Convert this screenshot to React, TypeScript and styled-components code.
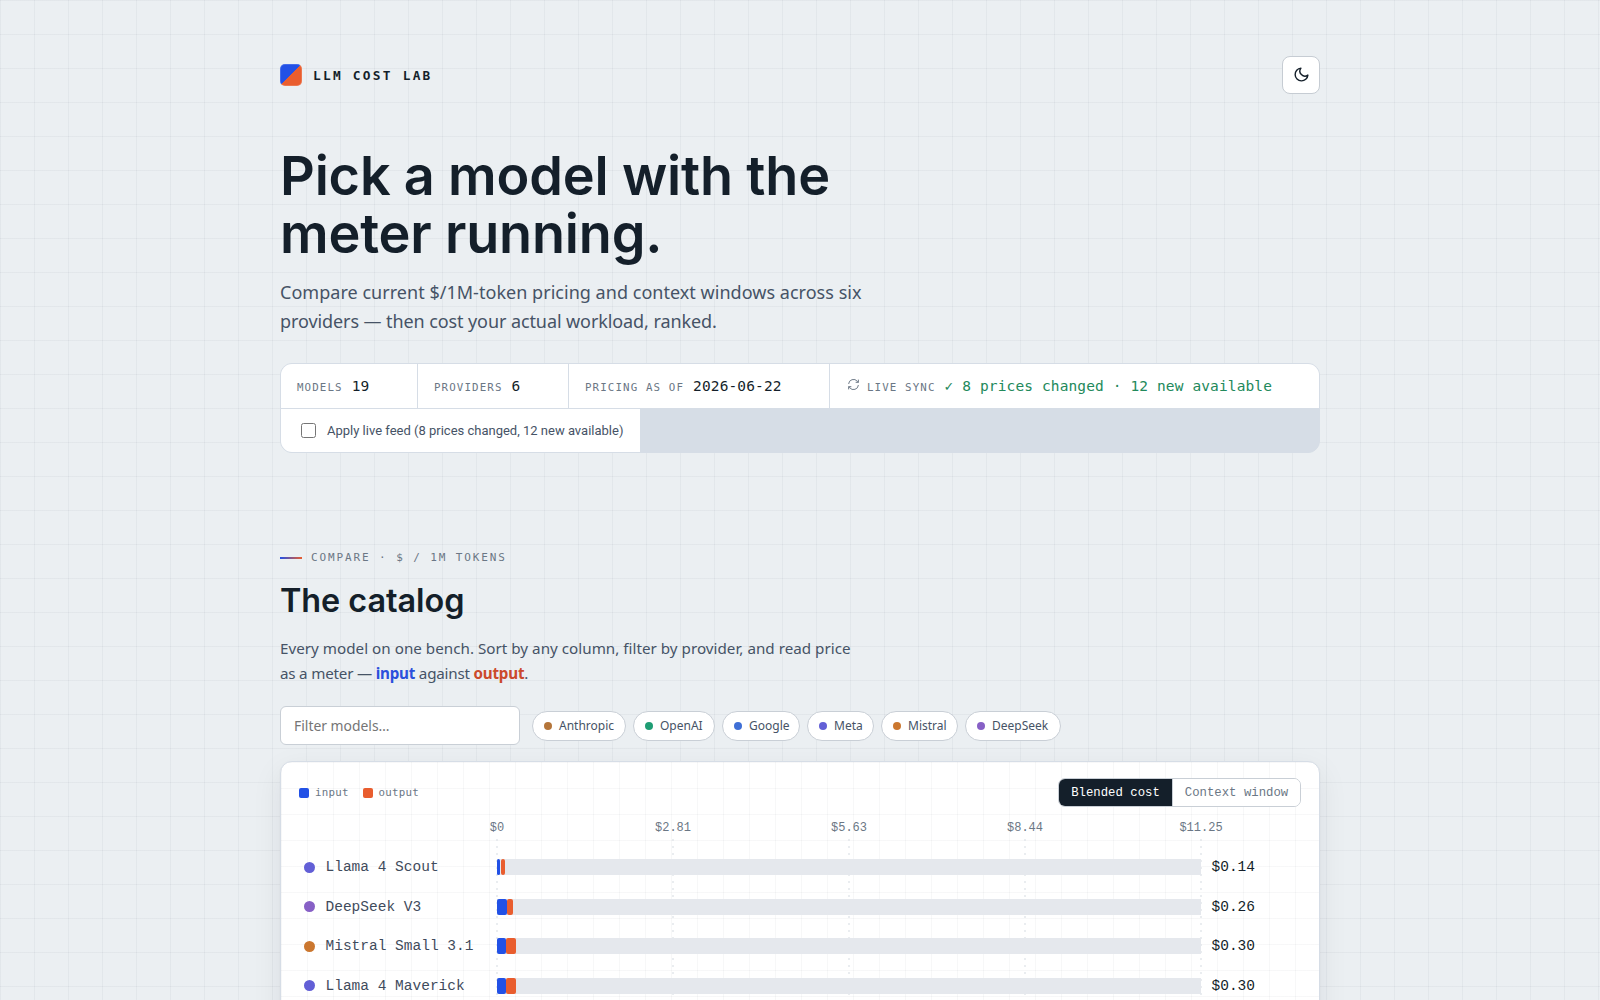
import React from "react";
import styled, { createGlobalStyle } from "styled-components";

const mono = `"Liberation Mono", "DejaVu Sans Mono", monospace`;
const monoCaps = `"DejaVu Sans Mono", "Liberation Mono", monospace`;
const sans = `"Noto Sans", Roboto, sans-serif`;
const display = `Inter, "Noto Sans", sans-serif`;

const ink = "#141f2a";
const soft = "#465366";
const muted = "#6b7785";
const line = "#d6dde6";
const blue = "#2251e6";
const orange = "#e95d2e";

const GlobalStyle = createGlobalStyle`
  * { box-sizing: border-box; }
  html { background: #ebeff2; }
  body {
    margin: 0;
    height: 1000px;
    overflow: hidden;
    color: ${ink};
    font-family: ${sans};
    background-color: #ebeff2;
    background-image:
      linear-gradient(to right, rgba(30, 45, 60, 0.045) 1px, transparent 1px),
      linear-gradient(to bottom, rgba(30, 45, 60, 0.045) 1px, transparent 1px);
    background-size: 34px 34px;
  }
`;

const Page = styled.div`
  width: 1040px;
  margin: 0 auto;
  padding-top: 56px;
`;

const TopBar = styled.header`
  display: flex;
  align-items: center;
  justify-content: space-between;
  height: 38px;
`;

const Brand = styled.div`
  display: flex;
  align-items: center;
  gap: 11px;
  font: 700 12.8px/22px ${monoCaps};
  letter-spacing: 2.26px;
`;

const BrandName = styled.span`
  padding-top: 1px;
`;

const Logo = styled.span`
  width: 22px;
  height: 22px;
  border-radius: 5px;
  background: linear-gradient(135deg, ${blue} 0 50%, ${orange} 50% 100%);
  box-shadow: inset 0 0 0 1px rgba(255, 255, 255, 0.16);
`;

const ThemeButton = styled.button`
  display: grid;
  place-items: center;
  width: 38px;
  height: 38px;
  padding: 0 0 1px 0;
  border: 1px solid #c6ccd3;
  border-radius: 8px;
  background: #fff;
  color: ${ink};
`;

const Title = styled.h1`
  margin: 53px 0 0;
  font: 600 54px/58.24px ${display};
  letter-spacing: -0.18px;
`;

const TextLine = styled.span<{ $ls?: number }>`
  display: block;
  white-space: nowrap;
  letter-spacing: ${(p) => p.$ls ?? 0}px;
`;

const Lead = styled.p`
  margin: 15px 0 0;
  color: ${soft};
  font-size: 18px;
  line-height: 29px;
`;

const Stats = styled.section`
  display: flex;
  flex-wrap: wrap;
  gap: 1px;
  margin-top: 27px;
  border: 1px solid ${line};
  border-radius: 12px;
  overflow: hidden;
  background: ${line};
`;

const Stat = styled.div<{ $w?: number }>`
  display: flex;
  align-items: baseline;
  gap: 9px;
  width: ${(p) => (p.$w ? `${p.$w}px` : "auto")};
  flex: ${(p) => (p.$w ? "none" : "1")};
  height: 44px;
  padding: 1px 0 0 16px;
  background: #fff;
  line-height: 43px;
  white-space: nowrap;
`;

const StatLabel = styled.span`
  color: ${muted};
  font-family: ${monoCaps};
  font-size: 10.8px;
  letter-spacing: 1.12px;
`;

const StatValue = styled.span<{ $ok?: boolean }>`
  color: ${(p) => (p.$ok ? "#22895b" : ink)};
  font-family: ${monoCaps};
  font-size: 14.5px;
  letter-spacing: 0.12px;
`;

const SyncIcon = styled.svg`
  width: 13px;
  height: 13px;
  margin-right: -1.5px;
  margin-left: 0.5px;
`;

const FeedToggle = styled.label`
  display: flex;
  align-items: center;
  gap: 11px;
  width: 359px;
  height: 43px;
  padding-left: 20px;
  background: #fff;
  color: ${soft};
  font: 13px Roboto, sans-serif;
  white-space: nowrap;
`;

const Checkbox = styled.input`
  width: 15px;
  height: 15px;
  margin: 0;
`;

const Eyebrow = styled.div`
  display: flex;
  align-items: center;
  gap: 9px;
  margin-top: 95px;
  color: ${muted};
  font: 11px/20px ${monoCaps};
  letter-spacing: 1.89px;
  &::before {
    content: "";
    width: 22px;
    height: 2px;
    background: linear-gradient(90deg, ${blue}, ${orange});
  }
`;

const SectionTitle = styled.h2`
  margin: 13px 0 0;
  font: 600 32.4px/40px ${display};
  letter-spacing: -0.05px;
`;

const Intro = styled.p`
  margin: 15px 0 0;
  color: ${soft};
  font-size: 15.2px;
  line-height: 24.2px;
`;

const Tone = styled.strong<{ $c: string }>`
  color: ${(p) => p.$c};
  font-weight: 700;
`;

const Filters = styled.div`
  display: flex;
  align-items: center;
  gap: 12px;
  margin-top: 21.2px;
`;

const SearchInput = styled.input`
  width: 240px;
  height: 39px;
  padding: 0 13px;
  border: 1px solid #c9cfd6;
  border-radius: 6px;
  background: #fff;
  font: 13.9px ${sans};
  &::placeholder { color: #757575; }
`;

const ChipList = styled.div`
  display: flex;
  gap: 7px;
`;

const Chip = styled.button<{ $w: number }>`
  display: flex;
  align-items: center;
  gap: 7px;
  width: ${(p) => p.$w}px;
  height: 30px;
  padding: 0 0 0 11px;
  border: 1px solid #c9cfd6;
  border-radius: 15px;
  background: #fff;
  color: ${soft};
  font: 12px ${sans};
`;

const Dot = styled.span<{ $c: string; $s?: number }>`
  flex: none;
  width: ${(p) => p.$s ?? 8}px;
  height: ${(p) => p.$s ?? 8}px;
  border-radius: 50%;
  background: ${(p) => p.$c};
`;

const Card = styled.section`
  position: relative;
  height: 700px;
  margin-top: 16px;
  padding: 16px 18px;
  border: 1px solid ${line};
  border-radius: 12px;
  background-color: #fff;
  background-image:
    linear-gradient(to right, rgba(30, 45, 60, 0.035) 1px, transparent 1px),
    linear-gradient(to bottom, rgba(30, 45, 60, 0.035) 1px, transparent 1px);
  background-size: 26px 26px;
  box-shadow: 0 1px 2px rgba(20, 31, 42, 0.06), 0 10px 30px rgba(20, 31, 42, 0.08);
`;

const CardHead = styled.div`
  display: flex;
  align-items: center;
  justify-content: space-between;
`;

const Legend = styled.div`
  display: flex;
  gap: 14px;
  color: ${muted};
  font: 10.8px/16px ${monoCaps};
  letter-spacing: 0.22px;
`;

const LegendItem = styled.span<{ $c: string }>`
  display: flex;
  align-items: center;
  gap: 6px;
  &::before {
    content: "";
    width: 10px;
    height: 10px;
    border-radius: 2px;
    background: ${(p) => p.$c};
  }
`;

const Segmented = styled.div`
  display: flex;
  height: 29px;
  border: 1px solid #c9cfd6;
  border-radius: 7px;
  overflow: hidden;
  background: #fff;
`;

const Segment = styled.button<{ $on?: boolean }>`
  width: ${(p) => (p.$on ? 113 : 128)}px;
  padding: 0;
  border: 0;
  border-left: ${(p) => (p.$on ? "0" : "1px solid #c9cfd6")};
  background: ${(p) => (p.$on ? ink : "#fff")};
  color: ${(p) => (p.$on ? "#fff" : muted)};
  font: 12.3px ${mono};
`;

const Chart = styled.div`
  position: relative;
  margin-top: 11px;
`;

const Axis = styled.div`
  display: flex;
  justify-content: space-between;
  width: 768px;
  height: 20px;
  margin-left: 166px;
  color: ${muted};
  font: 12px/20px ${mono};
`;

const Tick = styled.span`
  width: 64px;
  text-align: center;
`;

const GridLines = styled.svg`
  position: absolute;
  left: 197px;
  top: 21px;
  width: 706px;
  height: 400px;
`;

const Row = styled.div`
  position: relative;
  display: grid;
  grid-template-columns: 11px 182px 704px auto;
  align-items: center;
  height: 39.5px;
  padding-left: 5px;
  font: 14.5px/20px ${mono};
`;

const Rows = styled.div`
  padding-top: 9.5px;
`;

const ModelName = styled.span`
  padding-left: 10.5px;
  color: #3f4b5c;
  white-space: nowrap;
`;

const Track = styled.div`
  display: flex;
  gap: 0.4px;
  height: 16px;
  margin-left: -0.4px;
  background: #e5e8ed;
`;

const Fill = styled.span<{ $c: string }>`
  height: 16px;
  border-radius: 2px;
  background: ${(p) => p.$c};
`;

const Price = styled.span`
  padding-left: 10.5px;
  color: ${ink};
`;

const providers = [
  { name: "Anthropic", color: "#b4753a", w: 94 },
  { name: "OpenAI", color: "#1f9d74", w: 82 },
  { name: "Google", color: "#3f6fd6", w: 78 },
  { name: "Meta", color: "#625fd6", w: 67 },
  { name: "Mistral", color: "#cb772f", w: 77 },
  { name: "DeepSeek", color: "#8760c6", w: 96 },
];

const models = [
  { name: "Llama 4 Scout", color: "#625fd6", input: 3.5, output: 4.6, price: "$0.14" },
  { name: "DeepSeek V3", color: "#8760c6", input: 10.4, output: 5.4, price: "$0.26" },
  { name: "Mistral Small 3.1", color: "#cb772f", input: 9.4, output: 9.2, price: "$0.30" },
  { name: "Llama 4 Maverick", color: "#625fd6", input: 9.4, output: 9.2, price: "$0.30" },
];

const ticks = ["$0", "$2.81", "$5.63", "$8.44", "$11.25"];

export default function App() {
  return (
    <>
      <GlobalStyle />
      <Page>
        <TopBar>
          <Brand>
            <Logo />
            <BrandName>LLM COST LAB</BrandName>
          </Brand>
          <ThemeButton aria-label="Toggle theme">
            <svg width="17" height="17" viewBox="0 0 24 24" fill="none" stroke="currentColor" strokeWidth="2" strokeLinejoin="round">
              <path d="M21 12.8A9 9 0 1 1 11.2 3a7 7 0 0 0 9.8 9.8z" />
            </svg>
          </ThemeButton>
        </TopBar>

        <Title>
          Pick a model with the
          <br />
          meter running.
        </Title>
        <Lead>
          <TextLine $ls={0.03}>Compare current $/1M-token pricing and context windows across six</TextLine>
          <TextLine $ls={-0.09}>providers — then cost your actual workload, ranked.</TextLine>
        </Lead>

        <Stats>
          <Stat $w={136}>
            <StatLabel>MODELS</StatLabel>
            <StatValue>19</StatValue>
          </Stat>
          <Stat $w={150}>
            <StatLabel>PROVIDERS</StatLabel>
            <StatValue>6</StatValue>
          </Stat>
          <Stat $w={260}>
            <StatLabel>PRICING AS OF</StatLabel>
            <StatValue>2026-06-22</StatValue>
          </Stat>
          <Stat>
            <SyncIcon viewBox="0 0 24 24" fill="none" stroke={muted} strokeWidth="1.8">
              <path d="M3 11a9 9 0 0 1 16-5l2 2M21 3v5h-5M21 13a9 9 0 0 1-16 5l-2-2M3 21v-5h5" />
            </SyncIcon>
            <StatLabel>LIVE SYNC</StatLabel>
            <StatValue $ok>✓ 8 prices changed · 12 new available</StatValue>
          </Stat>
          <FeedToggle>
            <Checkbox type="checkbox" />
            Apply live feed (8 prices changed, 12 new available)
          </FeedToggle>
        </Stats>

        <Eyebrow>COMPARE · $ / 1M TOKENS</Eyebrow>
        <SectionTitle>The catalog</SectionTitle>
        <Intro>
          <TextLine $ls={0.02}>
            Every model on one bench. Sort by any column, filter by provider, and read price
          </TextLine>
          <TextLine $ls={-0.21}>
            as a meter — <Tone $c="#2b50dc">input</Tone> against <Tone $c="#cb4a2c">output</Tone>.
          </TextLine>
        </Intro>

        <Filters>
          <SearchInput placeholder="Filter models…" />
          <ChipList>
            {providers.map((p) => (
              <Chip key={p.name} $w={p.w}>
                <Dot $c={p.color} />
                {p.name}
              </Chip>
            ))}
          </ChipList>
        </Filters>

        <Card>
          <CardHead>
            <Legend>
              <LegendItem $c={blue}>input</LegendItem>
              <LegendItem $c={orange}>output</LegendItem>
            </Legend>
            <Segmented>
              <Segment $on>Blended cost</Segment>
              <Segment>Context window</Segment>
            </Segmented>
          </CardHead>
          <Chart>
            <Axis>
              {ticks.map((t) => (
                <Tick key={t}>{t}</Tick>
              ))}
            </Axis>
            <GridLines>
              {ticks.map((t, i) => (
                <line key={t} x1={1 + i * 176} x2={1 + i * 176} y1="0" y2="400" stroke="#dce1e7" strokeWidth="1.2" strokeDasharray="2 5" />
              ))}
            </GridLines>
            <Rows>
              {models.map((m) => (
                <Row key={m.name}>
                  <Dot $c={m.color} $s={11} />
                  <ModelName>{m.name}</ModelName>
                  <Track>
                    <Fill $c={blue} style={{ width: m.input }} />
                    <Fill $c={orange} style={{ width: m.output }} />
                  </Track>
                  <Price>{m.price}</Price>
                </Row>
              ))}
            </Rows>
          </Chart>
        </Card>
      </Page>
    </>
  );
}
